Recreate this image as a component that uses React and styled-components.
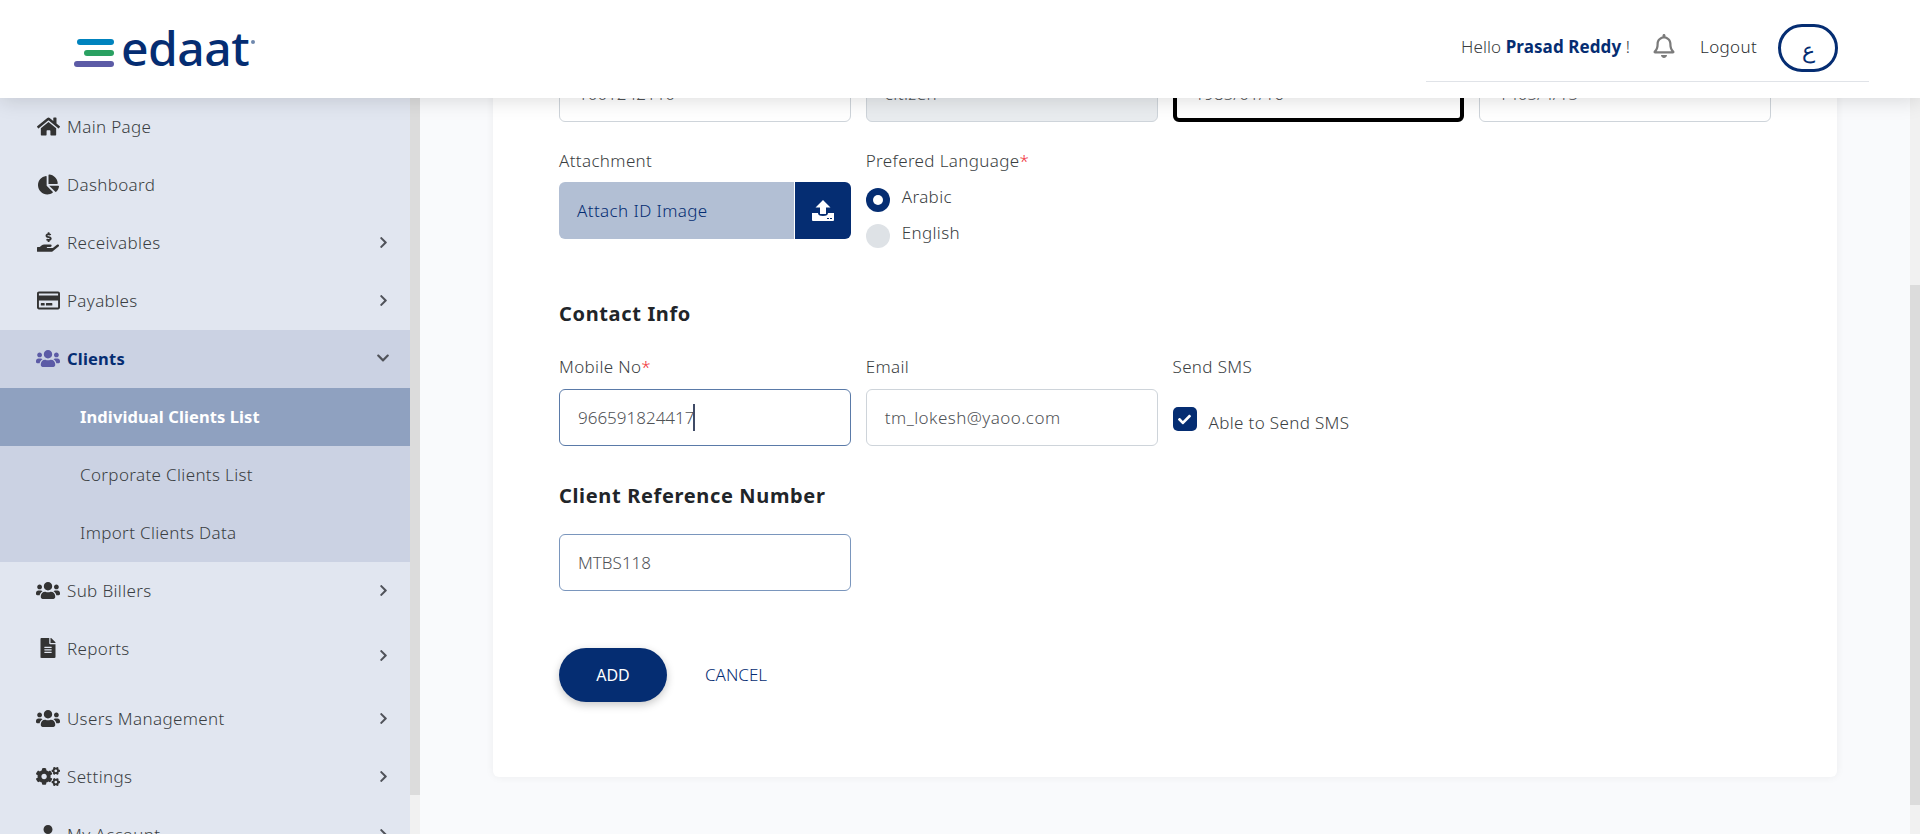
import React from "react";
import styled, { createGlobalStyle } from "styled-components";
import {
  FaHome,
  FaChartPie,
  FaHandHoldingUsd,
  FaRegCreditCard,
  FaUsers,
  FaFileAlt,
  FaCogs,
  FaUser,
  FaChevronRight,
  FaChevronDown,
  FaRegBell,
  FaCheck,
} from "react-icons/fa";

const NAVY = "#052d72";

const GlobalStyle = createGlobalStyle`
  html, body {
    margin: 0;
    padding: 0;
    height: 100%;
    overflow: hidden;
    background: #f9fafc;
    font-family: "Noto Sans", "Open Sans", sans-serif;
    font-weight: 300;
    color: #3a3e42;
  }
  * { box-sizing: border-box; }
`;

const Page = styled.div`
  height: 100vh;
  display: flex;
  flex-direction: column;
  overflow: hidden;
`;

const Header = styled.header`
  position: relative;
  z-index: 5;
  height: 98px;
  flex: none;
  background: #fff;
  box-shadow: 0 2px 20px rgba(0, 0, 0, 0.14);
  display: flex;
  justify-content: space-between;
  align-items: flex-start;
  padding: 0 51px 0 74px;
`;

const Logo = styled.div`
  display: flex;
  align-items: center;
  height: 96px;
  gap: 7px;
`;

const LogoBars = styled.div`
  display: flex;
  flex-direction: column;
  align-items: flex-end;
  gap: 5px;
  width: 40px;
  margin-top: 10px;
`;

const LogoBar = styled.span`
  display: block;
  height: 6px;
  border-radius: 3px;
  width: ${(p) => p.$w}px;
  background: ${(p) => p.$c};
`;

const LogoWord = styled.span`
  font-family: "Noto Sans", sans-serif;
  font-size: 48px;
  line-height: 52px;
  font-weight: 500;
  letter-spacing: -0.5px;
  color: ${NAVY};
`;

const LogoMark = styled.span`
  width: 4px;
  height: 4px;
  border-radius: 50%;
  background: #6f88ad;
  margin: -12px 0 0 -5px;
`;

const UserBar = styled.div`
  width: 443px;
  height: 82px;
  border-bottom: 1px solid #e0e3e8;
  display: flex;
  align-items: center;
  padding: 11px 31px 0 35px;
  font-size: 17px;
  letter-spacing: 0.35px;
`;

const Hello = styled.span`
  white-space: nowrap;
  color: #3a3d40;
  letter-spacing: 0.1px;
  b {
    font-weight: 700;
    color: ${NAVY};
  }
`;

const Bell = styled(FaRegBell)`
  font-size: 24px;
  color: #7b7b7b;
  margin-left: 22px;
  flex: none;
`;

const Logout = styled.span`
  margin-left: 24px;
  color: #2b2e31;
`;

const LangButton = styled.div`
  margin: 4px 0 0 auto;
  width: 60px;
  height: 48px;
  border: 3px solid ${NAVY};
  border-radius: 24px;
  display: flex;
  align-items: center;
  justify-content: center;
  color: ${NAVY};
  font-family: "DejaVu Sans", sans-serif;
  font-size: 22px;
  padding-top: 4px;
`;

const Body = styled.div`
  flex: 1;
  min-height: 0;
  display: flex;
`;

const Sidebar = styled.nav`
  width: 410px;
  flex: none;
  background: #e1e6f0;
  overflow: hidden;
`;

const NavRow = styled.div`
  height: ${(p) => (p.$tall ? 70 : 58)}px;
  padding: ${(p) => (p.$tall ? "0 20px 14px 36px" : "0 20px 2px 36px")};
  display: flex;
  align-items: center;
  font-size: ${(p) => (p.$open ? 16.5 : 17)}px;
  letter-spacing: ${(p) => (p.$open ? 0.2 : 0.35)}px;
  color: ${(p) => (p.$open ? NAVY : "#3a3e42")};
  font-weight: ${(p) => (p.$open ? 700 : 300)};
  background: ${(p) => (p.$open ? "#cbd2e3" : "transparent")};
`;

const NavIcon = styled.span`
  width: 24px;
  margin-right: 7px;
  flex: none;
  display: flex;
  justify-content: center;
  font-size: ${(p) => p.$size}px;
  color: ${(p) => (p.$open ? "#5c5ba6" : "#333")};
`;

const NavChevron = styled.span`
  margin-left: auto;
  display: flex;
  font-size: ${(p) => (p.$open ? 14 : 13)}px;
  color: #50535a;
  margin-top: ${(p) => (p.$tall ? 14 : 0)}px;
`;

const SubList = styled.div`
  background: #cbd2e3;
`;

const SubRow = styled.div`
  height: 58px;
  padding: 0 0 2px 80px;
  display: flex;
  align-items: center;
  font-size: ${(p) => (p.$active ? 16.5 : 17)}px;
  letter-spacing: ${(p) => (p.$active ? 0.1 : 0.35)}px;
  color: ${(p) => (p.$active ? "#fff" : "#3a3e42")};
  font-weight: ${(p) => (p.$active ? 700 : 300)};
  background: ${(p) => (p.$active ? "#8fa1c0" : "transparent")};
`;

const ScrollTrack = styled.div`
  width: 10px;
  flex: none;
  background: #f1f1f1;
`;

const ScrollThumb = styled.div`
  background: #dcdcdc;
  height: ${(p) => p.$h}px;
  margin-top: ${(p) => p.$top}px;
`;

const Main = styled.main`
  flex: 1;
  min-width: 0;
  background: #f9fafc;
  padding: 0 73px;
  overflow: hidden;
`;

// the page is scrolled down in the shot, so the card starts under the header
const Card = styled.section`
  margin-top: -33px;
  height: 712px;
  padding: 0 66px;
  background: #fff;
  border-radius: 6px;
  box-shadow: 0 0 8px rgba(0, 0, 0, 0.06);
`;

const Grid = styled.div`
  display: grid;
  grid-template-columns: repeat(4, 1fr);
  column-gap: 15px;
  margin-top: ${(p) => p.$mt || 0}px;
`;

const Label = styled.label`
  display: block;
  font-size: 17px;
  letter-spacing: 0.35px;
  line-height: 24px;
  margin-bottom: ${(p) => p.$gap || 9}px;
  color: #3a3e42;
  white-space: nowrap;
`;

const Required = styled.span`
  color: #f0323c;
`;

const Input = styled.div`
  height: 57px;
  padding: 0 18px;
  display: flex;
  align-items: center;
  font-size: 17px;
  letter-spacing: ${(p) => (p.$tight ? 0 : 0.45)}px;
  background: ${(p) => (p.$disabled ? "#e9ecef" : "#fff")};
  border: ${(p) => (p.$outlined ? "4px solid #000" : `1px solid ${p.$border || "#ced4da"}`)};
  border-radius: 6px;
  color: #4f5256;
`;

const Caret = styled.span`
  width: 2px;
  height: 27px;
  background: #3f4a66;
  margin-left: -1px;
`;

const Attach = styled.div`
  height: 57px;
  display: flex;
  border-radius: 6px;
  overflow: hidden;
`;

const AttachText = styled.div`
  flex: 1;
  background: #b2bfd4;
  color: ${NAVY};
  font-size: 17px;
  letter-spacing: 0.4px;
  display: flex;
  align-items: center;
  padding-left: 18px;
  border-right: 1px solid #fff;
`;

const AttachButton = styled.div`
  width: 56px;
  background: ${NAVY};
  display: flex;
  align-items: center;
  justify-content: center;
`;

const RadioRow = styled.div`
  display: flex;
  align-items: center;
  height: 36px;
  gap: 12px;
  font-size: 17px;
  letter-spacing: 0.35px;
`;

const RadioDot = styled.span`
  width: 24px;
  height: 24px;
  flex: none;
  border-radius: 50%;
  display: flex;
  align-items: center;
  justify-content: center;
  background: ${(p) => (p.$checked ? NAVY : "#dee2e6")};
  margin-top: 8px;
  &::after {
    content: "";
    width: 10px;
    height: 10px;
    border-radius: 50%;
    background: ${(p) => (p.$checked ? "#fff" : "transparent")};
  }
`;

const RadioList = styled.div`
  margin-top: -4px;
`;

const Heading = styled.h3`
  margin: ${(p) => p.$mt}px 0 0;
  font-size: 20px;
  letter-spacing: 0.65px;
  line-height: 30px;
  font-weight: 700;
  color: #212529;
`;

const CheckRow = styled.div`
  display: flex;
  align-items: center;
  gap: 12px;
  height: 30px;
  margin-top: 25px;
  font-size: 17px;
  letter-spacing: 0.35px;
`;

const CheckBox = styled.span`
  width: 24px;
  height: 24px;
  border-radius: 5px;
  background: ${NAVY};
  color: #fff;
  font-size: 13px;
  display: flex;
  align-items: center;
  justify-content: center;
`;

const CheckText = styled.span`
  margin-top: 6px;
`;

const Actions = styled.div`
  display: flex;
  align-items: center;
  gap: 38px;
  margin-top: 57px;
`;

const AddButton = styled.button`
  width: 108px;
  height: 54px;
  border: 0;
  border-radius: 27px;
  background: ${NAVY};
  color: #fff;
  font-family: inherit;
  font-size: 16px;
  font-weight: 400;
  box-shadow: 0 3px 8px rgba(0, 0, 0, 0.22);
`;

const CancelButton = styled.button`
  border: 0;
  padding: 0 0 2px;
  background: none;
  color: ${NAVY};
  font-family: inherit;
  font-size: 17px;
  font-weight: 300;
`;

function UploadIcon() {
  return (
    <svg width="22" height="21" viewBox="0 0 22 21">
      <path d="M11 0l7.500 7.500H14v6.500H8V7.500H3.500z" fill="#fff" />
      <path
        d="M0 13h6c0 2 1.500 3 5 3s5-1 5-3h6v7a1 1 0 0 1-1 1H1a1 1 0 0 1-1-1z"
        fill="#fff"
      />
      <path d="M15 18.500h2M18 18.500h2" stroke={NAVY} strokeWidth="1" />
    </svg>
  );
}

function NavItem({ icon: Icon, size, label, arrow, open, tall }) {
  return (
    <NavRow $open={open} $tall={tall}>
      <NavIcon $open={open} $size={size}>
        <Icon />
      </NavIcon>
      {label}
      {arrow && (
        <NavChevron $open={open} $tall={tall}>
          {open ? <FaChevronDown /> : <FaChevronRight />}
        </NavChevron>
      )}
    </NavRow>
  );
}

export default function App() {
  return (
    <Page>
      <GlobalStyle />
      <Header>
        <Logo>
          <LogoBars>
            <LogoBar $w={37} $c="#0083be" />
            <LogoBar $w={30} $c="#2aa162" />
            <LogoBar $w={40} $c="#5c5ba6" />
          </LogoBars>
          <LogoWord>edaat</LogoWord>
          <LogoMark />
        </Logo>
        <UserBar>
          <Hello>
            Hello <b>Prasad Reddy</b> !
          </Hello>
          <Bell />
          <Logout>Logout</Logout>
          <LangButton>ع</LangButton>
        </UserBar>
      </Header>
      <Body>
        <Sidebar>
          <NavItem icon={FaHome} size={23} label="Main Page" />
          <NavItem icon={FaChartPie} size={21} label="Dashboard" />
          <NavItem icon={FaHandHoldingUsd} size={22} label="Receivables" arrow />
          <NavItem icon={FaRegCreditCard} size={23} label="Payables" arrow />
          <NavItem icon={FaUsers} size={25} label="Clients" arrow open />
          <SubList>
            <SubRow $active>Individual Clients List</SubRow>
            <SubRow>Corporate Clients List</SubRow>
            <SubRow>Import Clients Data</SubRow>
          </SubList>
          <NavItem icon={FaUsers} size={25} label="Sub Billers" arrow />
          <NavItem icon={FaFileAlt} size={20} label="Reports" arrow tall />
          <NavItem icon={FaUsers} size={25} label="Users Management" arrow />
          <NavItem icon={FaCogs} size={25} label="Settings" arrow />
          <NavItem icon={FaUser} size={18} label="My Account" arrow />
        </Sidebar>
        <ScrollTrack>
          <ScrollThumb $top={0} $h={697} />
        </ScrollTrack>
        <Main>
          <Card>
            <Grid>
              <Input $tight>1001242110</Input>
              <Input $disabled>citizen</Input>
              <Input $outlined $tight>1985/01/16</Input>
              <Input $tight>1405/4/15</Input>
            </Grid>
            <Grid $mt={27}>
              <div>
                <Label>Attachment</Label>
                <Attach>
                  <AttachText>Attach ID Image</AttachText>
                  <AttachButton>
                    <UploadIcon />
                  </AttachButton>
                </Attach>
              </div>
              <div>
                <Label>
                  Prefered Language<Required>*</Required>
                </Label>
                <RadioList>
                  <RadioRow>
                    <RadioDot $checked />
                    Arabic
                  </RadioRow>
                  <RadioRow>
                    <RadioDot />
                    English
                  </RadioRow>
                </RadioList>
              </div>
            </Grid>
            <Heading $mt={49}>Contact Info</Heading>
            <Grid $mt={26}>
              <div>
                <Label $gap={10}>
                  Mobile No<Required>*</Required>
                </Label>
                <Input $tight $border="#5a7aa8">
                  966591824417
                  <Caret />
                </Input>
              </div>
              <div>
                <Label $gap={10}>Email</Label>
                <Input>tm_lokesh@yaoo.com</Input>
              </div>
              <div>
                <Label $gap={10}>Send SMS</Label>
                <CheckRow>
                  <CheckBox>
                    <FaCheck />
                  </CheckBox>
                  <CheckText>Able to Send SMS</CheckText>
                </CheckRow>
              </div>
            </Grid>
            <Heading $mt={35}>Client Reference Number</Heading>
            <Grid $mt={23}>
              <Input $tight $border="#7a96bd">MTBS118</Input>
            </Grid>
            <Actions>
              <AddButton>ADD</AddButton>
              <CancelButton>CANCEL</CancelButton>
            </Actions>
          </Card>
        </Main>
        <ScrollTrack>
          <ScrollThumb $top={187} $h={520} />
        </ScrollTrack>
      </Body>
    </Page>
  );
}
